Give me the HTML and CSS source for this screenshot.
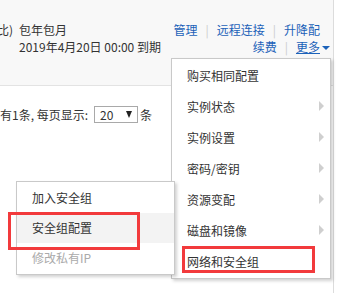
FILE: index.html
```html
<!DOCTYPE html>
<html>
<head>
<meta charset="utf-8">
<link rel="stylesheet" href="styles.css">
</head>
<body>
<div class="panel">
  <div class="topbar">
    <div class="info">
      <div class="row"><span class="cut">比)</span><span>包年包月</span></div>
      <div class="row indent">2019年4月20日 00:00 到期</div>
    </div>
    <div class="ops">
      <div class="row"><a class="lnk">管理</a><span class="sep">|</span><a class="lnk">远程连接</a><span class="sep">|</span><a class="lnk">升降配</a></div>
      <div class="row"><a class="lnk">续费</a><span class="sep">|</span><a class="lnk more">更多</a><span class="caret"></span></div>
    </div>
  </div>
  <div class="pager">
    <span>有1条, 每页显示:</span>
    <span class="select"><span>20</span><span class="tri"></span></span>
    <span>条</span>
  </div>
</div>

<div class="menu main-menu">
  <div class="item">购买相同配置</div>
  <div class="item sub">实例状态</div>
  <div class="item sub">实例设置</div>
  <div class="item sub">密码/密钥</div>
  <div class="item sub">资源变配</div>
  <div class="item sub">磁盘和镜像</div>
  <div class="item">网络和安全组</div>
</div>

<div class="menu sub-menu">
  <div class="item">加入安全组</div>
  <div class="item active">安全组配置</div>
  <div class="item disabled">修改私有IP</div>
</div>

<div class="mark mark-a"></div>
<div class="mark mark-b"></div>
</body>
</html>
```

FILE: styles.css
```css
html, body {
  margin: 0;
  padding: 0;
  background: #fff;
  font-family: "Noto Sans CJK SC", "Liberation Sans", sans-serif;
  font-size: 12px;
  color: #333;
  overflow: hidden;
}
body {
  position: relative;
  width: 345px;
  height: 293px;
}
.panel {
  width: 334px;
  height: 293px;
  border-right: 1px solid #dcdcdc;
  box-sizing: border-box;
}
.topbar {
  height: 86px;
  background: #f8f8f8;
  border-bottom: 1px solid #e3e3e3;
  box-sizing: border-box;
  display: flex;
  justify-content: space-between;
  padding: 21px 13px 0 0;
}
.row {
  height: 17px;
  line-height: 17px;
  white-space: nowrap;
}
.info .cut {
  display: inline-block;
  margin-left: -3px;
  width: 22px;
}
.indent {
  padding-left: 19px;
}
.ops {
  display: flex;
  flex-direction: column;
  align-items: flex-end;
}
.lnk {
  color: #1c62b9;
}
.more {
  text-decoration: underline;
}
.sep {
  color: #ccc;
  margin: 0 8px;
}
.caret {
  display: inline-block;
  width: 0;
  height: 0;
  border-left: 4px solid transparent;
  border-right: 4px solid transparent;
  border-top: 4px solid #1c62b9;
  margin-left: 2px;
  vertical-align: 2px;
  margin-right: -10px;
}
.pager {
  display: flex;
  align-items: center;
  margin-top: 20px;
  height: 17px;
  white-space: nowrap;
}
.select {
  display: inline-flex;
  align-items: center;
  justify-content: space-between;
  box-sizing: border-box;
  width: 44px;
  height: 17px;
  border: 1px solid #a9a9a9;
  padding: 0 5px;
  margin: 0 2px 0 6px;
  background: #fff;
}
.tri {
  width: 0;
  height: 0;
  border-left: 3.5px solid transparent;
  border-right: 3.5px solid transparent;
  border-top: 7px solid #222;
}
.menu {
  position: absolute;
  background: #fff;
  border: 1px solid #c9c9c9;
  box-shadow: 2px 2px 3px rgba(0, 0, 0, 0.18);
  box-sizing: border-box;
}
.main-menu {
  left: 171px;
  top: 58px;
  width: 160px;
  padding: 1px 0;
}
.sub-menu {
  left: 16px;
  top: 181px;
  width: 159px;
  padding: 1px 0;
}
.item {
  height: 31px;
  line-height: 31px;
  padding-left: 15px;
  position: relative;
  white-space: nowrap;
}
.sub-menu .item {
  height: 30px;
  line-height: 30px;
}
.item.sub::after {
  content: "";
  position: absolute;
  right: 6px;
  top: 10px;
  border-top: 5px solid transparent;
  border-bottom: 5px solid transparent;
  border-left: 5px solid #cfcfcf;
}
.item.active {
  background: #f3f3f3;
}
.item.disabled {
  color: #aaa;
}
.mark {
  position: absolute;
  border: 3px solid #f23a3c;
  box-sizing: border-box;
}
.mark-a {
  left: 8px;
  top: 212px;
  width: 132px;
  height: 38px;
}
.mark-b {
  left: 182px;
  top: 246px;
  width: 133px;
  height: 27px;
}
```
